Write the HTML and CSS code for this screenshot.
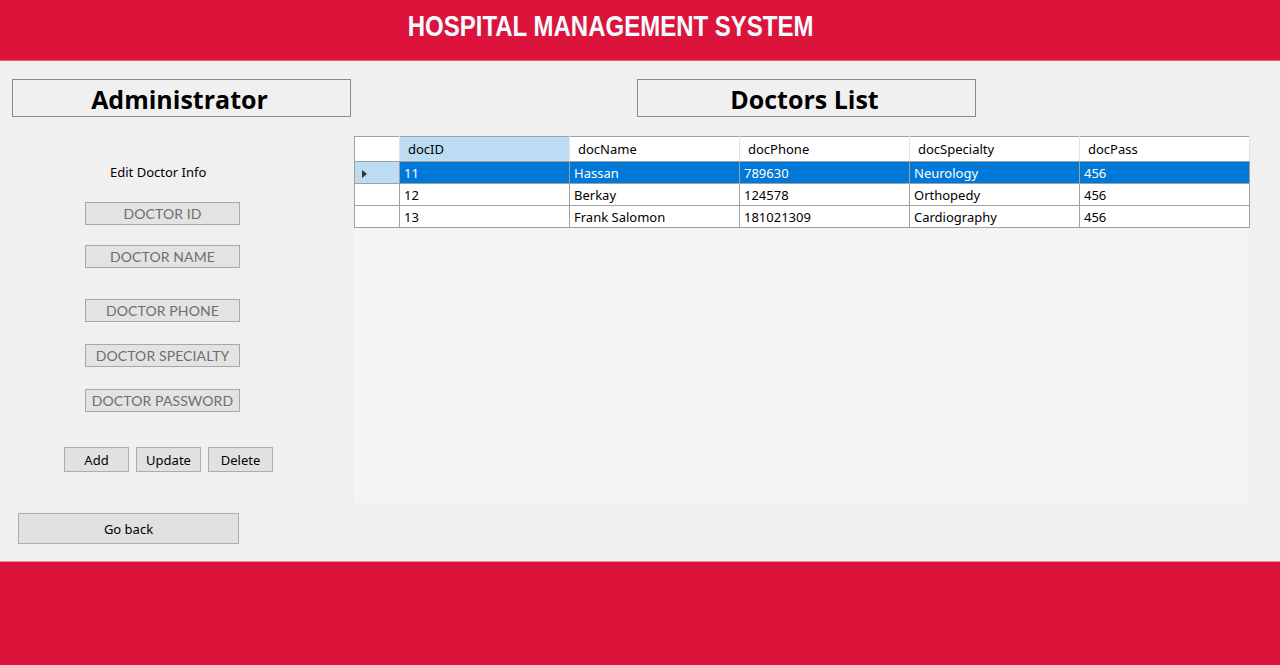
FILE: index.html
```html
<!DOCTYPE html>
<html>
<head>
<meta charset="utf-8">
<link rel="stylesheet" href="styles.css">
</head>
<body>
<div class="app">
  <header class="topbar"><h1 class="title">HOSPITAL MANAGEMENT SYSTEM</h1></header>
  <main class="main">
    <section class="left">
      <div class="boxtitle admin">Administrator</div>
      <div class="edit-label">Edit Doctor Info</div>
      <div class="fields">
        <div class="field f1">DOCTOR ID</div>
        <div class="field f2">DOCTOR NAME</div>
        <div class="field f3">DOCTOR PHONE</div>
        <div class="field f4">DOCTOR SPECIALTY</div>
        <div class="field f5">DOCTOR PASSWORD</div>
      </div>
      <div class="actions">
        <button class="btn small">Add</button>
        <button class="btn small">Update</button>
        <button class="btn small">Delete</button>
      </div>
      <button class="btn back">Go back</button>
    </section>
    <section class="right">
      <div class="boxtitle doctors">Doctors List</div>
      <div class="gridview">
        <table class="grid">
          <thead>
            <tr>
              <th class="rh"></th>
              <th class="sel-head">docID</th>
              <th>docName</th>
              <th>docPhone</th>
              <th>docSpecialty</th>
              <th>docPass</th>
            </tr>
          </thead>
          <tbody>
            <tr class="selected">
              <td class="rh cur"><span class="tri"></span></td>
              <td>11</td><td>Hassan</td><td>789630</td><td>Neurology</td><td>456</td>
            </tr>
            <tr>
              <td class="rh"></td>
              <td>12</td><td>Berkay</td><td>124578</td><td>Orthopedy</td><td>456</td>
            </tr>
            <tr>
              <td class="rh"></td>
              <td>13</td><td>Frank Salomon</td><td>181021309</td><td>Cardiography</td><td>456</td>
            </tr>
          </tbody>
        </table>
      </div>
    </section>
  </main>
  <footer class="bottombar"></footer>
</div>
</body>
</html>
```
FILE: styles.css
```css
* { box-sizing: border-box; }
html, body { margin: 0; padding: 0; }
body {
  width: 1280px;
  height: 665px;
  overflow: hidden;
  background: #f0f0f0;
  font-family: "Noto Sans", "Open Sans", sans-serif;
}
.app { display: flex; flex-direction: column; height: 665px; }
.topbar {
  height: 61px;
  background: #dc143c;
  display: flex;
  justify-content: center;
  padding-right: 59px;
  border-bottom: 1px solid #e0606f;
}
.title {
  margin: 10px 0 0 0;
  color: #f4fbff;
  font-family: "Liberation Sans", Arial, sans-serif;
  font-weight: bold;
  font-size: 30px;
  line-height: 32px;
  transform: scaleX(0.8);
  transform-origin: center;
  white-space: nowrap;
}
.main {
  height: 500px;
  display: flex;
  padding-top: 18px;
}
.left {
  width: 354px;
  padding-left: 12px;
  display: flex;
  flex-direction: column;
  align-items: flex-start;
}
.boxtitle {
  width: 339px;
  height: 38px;
  border: 1px solid #8a8a8a;
  font-family: "Open Sans", "Noto Sans", sans-serif;
  font-weight: bold;
  font-size: 25px;
  line-height: 38px;
  color: #000;
  text-align: center;
}
.admin { padding-right: 4px; }
.doctors { padding-right: 4px; }
.edit-label {
  margin: 46px 0 0 98px;
  font-size: 13px;
  color: #000;
  line-height: 18px;
}
.fields {
  margin-left: 73px;
  display: flex;
  flex-direction: column;
}
.field {
  width: 155px;
  height: 23px;
  background: #e3e3e3;
  border: 1px solid #a8a8a8;
  color: #6e6e6e;
  font-family: "Lato", "Noto Sans", sans-serif;
  font-size: 14px;
  line-height: 21px;
  text-align: center;
  letter-spacing: 0.1px;
}
.f1 { margin-top: 21px; }
.f2 { margin-top: 20px; }
.f3 { margin-top: 31px; }
.f4 { margin-top: 22px; }
.f5 { margin-top: 22px; }
.actions {
  margin: 35px 0 0 52px;
  display: flex;
  gap: 7px;
}
.btn {
  background: #e1e1e1;
  border: 1px solid #adadad;
  font-family: "Noto Sans", "Open Sans", sans-serif;
  font-size: 13px;
  color: #000;
  padding: 0;
  margin: 0;
}
.btn.small { width: 65px; height: 25px; }
.back {
  width: 221px;
  height: 31px;
  margin: 41px 0 0 6px;
}
.right {
  width: 896px;
  display: flex;
  flex-direction: column;
}
.doctors { margin-left: 283px; }
.gridview {
  margin-top: 19px;
  width: 895px;
  height: 367px;
  background: #f4f4f4;
}
.grid {
  border-collapse: collapse;
  table-layout: fixed;
  width: 895px;
  border: 1px solid #a0a0a0;
  font-family: "Noto Sans", "Open Sans", sans-serif;
  font-size: 13px;
  color: #000;
  background: #fff;
}
.grid th, .grid td {
  width: 170px;
  text-align: left;
  font-weight: normal;
  padding: 0 0 0 4px;
  border: 1px solid #a0a0a0;
  white-space: nowrap;
  overflow: hidden;
}
.grid th {
  height: 25px;
  padding-left: 8px;
  border-top: none;
  border-left: none;
  border-right: 1px solid #e2e2e2;
  border-bottom: 1px solid #a0a0a0;
}
.grid th.rh { width: 45px; border-right: 1px solid #e2e2e2; }
.grid th.sel-head { background: #bcdcf4; }
.grid td { height: 22px; line-height: 20px; }
.grid td.rh { width: 45px; border-left: none; background: #fff; }
.grid tr.selected td { background: #0078d7; color: #fff; }
.grid tr.selected td.rh { background: #bcdcf4; }
.tri {
  display: inline-block;
  width: 0; height: 0;
  border-top: 4px solid transparent;
  border-bottom: 4px solid transparent;
  border-left: 5px solid #333;
  margin-left: 3px;
  vertical-align: middle;
}
.bottombar {
  flex: 1;
  background: #dc143c;
  border-top: 1px solid #f08a9a;
}
```
